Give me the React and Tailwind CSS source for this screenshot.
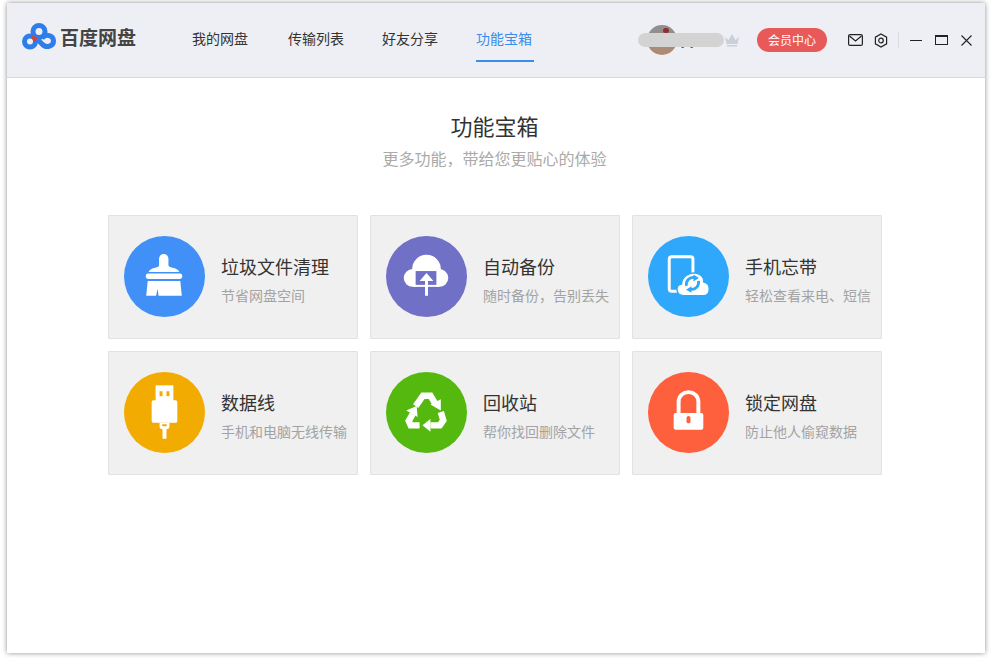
const font = { fontFamily: '"Noto Sans CJK SC", "Liberation Sans", sans-serif' };

function Logo() {
  return (
    <svg width="34" height="28" viewBox="0 0 34 28" fill="none">
      <circle cx="17" cy="8.500" r="6" stroke="#2f7de8" strokeWidth="5" />
      <circle cx="8" cy="18.500" r="5.500" stroke="#2f7de8" strokeWidth="5" />
      <path d="M12 13 L20 21 C24 25.500 31.500 23.500 31.500 18 C31.500 12 24 10.500 20 15" stroke="#2f7de8" strokeWidth="5" />
      <path d="M10.5 12 L15.5 15 L13 19 L9.5 15 Z" fill="#d8413a" />
    </svg>
  );
}

function Broom() {
  return (
    <svg width="82" height="82" viewBox="0 0 82 82" fill="#fff">
      <path d="M35.5 24 C35.5 17 45 17 45 24 V30 C45 33 55 32 56 37 H25 C26 32 35.5 33 35.5 30 Z" />
      <rect x="22" y="38.5" width="37" height="5.5" rx="2.5" />
      <path d="M24 46 H57 L58.5 61 H35 L34 54 L32.5 61 H22.5 Z" />
    </svg>
  );
}

function CloudUp() {
  return (
    <svg width="82" height="82" viewBox="0 0 82 82">
      <g fill="#fff">
        <circle cx="41" cy="34" r="14.5" />
        <circle cx="27" cy="43" r="9" />
        <circle cx="54" cy="43" r="9" />
        <rect x="27" y="38" width="27" height="14" />
      </g>
      <rect x="30" y="36" width="21" height="14" fill="#7170c7" />
      <path d="M41 38 L48 46 H42.5 V61 H39.5 V46 H34 Z" fill="#fff" />
    </svg>
  );
}

function PhoneCloud() {
  return (
    <svg width="82" height="82" viewBox="0 0 82 82">
      <rect x="21.5" y="21.5" width="24" height="35" rx="2.5" fill="none" stroke="#fff" strokeWidth="3" />
      <path d="M36 61 C28 61 27 50 34 49 C34 42 42 37 48 38 C54 39 57 43 56.5 47 C64 48 64 61 56 61 Z" fill="#fff" stroke="#2fa8fb" strokeWidth="1.5" />
      <g fill="none" stroke="#2fa8fb" strokeWidth="2.8">
        <path d="M39 51 A7 7 0 0 1 47 42.500" />
        <path d="M51 46 A7 7 0 0 1 43 54.500" />
      </g>
      <path d="M46 39.500 L51.500 43 L46 46.500 Z M44 51.500 L38.500 55 L44 58 Z" fill="#2fa8fb" />
    </svg>
  );
}

function Usb() {
  return (
    <svg width="82" height="82" viewBox="0 0 82 82">
      <rect x="32" y="14" width="18" height="16" fill="#fff" />
      <rect x="36" y="20" width="3" height="5" fill="#f2ab00" />
      <rect x="43" y="20" width="3" height="5" fill="#f2ab00" />
      <rect x="28" y="29" width="26" height="23" rx="2" fill="#fff" />
      <path d="M36 52 H46 V56 C46 58 44 58.500 43 58.500 V68 H39 V58.500 C38 58.500 36 58 36 56 Z" fill="#fff" />
      <rect x="38.500" y="53.500" width="5" height="2" rx="1" fill="#f2ab00" />
    </svg>
  );
}

function Recycle() {
  return (
    <svg width="82" height="82" viewBox="0 0 82 82">
      <g fill="none" stroke="#fff" strokeWidth="6.500">
        <path d="M30 35 L37.500 24.500 H45 L49.500 32" />
        <path d="M55.500 41 L58 49.500 L54.500 54.500 H45" />
        <path d="M34 54.500 H25 L23 50 L27 43" />
      </g>
      <g fill="#fff">
        <path d="M45 33.500 L55.500 28 L55.500 39.500 Z" />
        <path d="M45 48 V61 L37 54.500 Z" />
        <path d="M20.500 39.500 L31 35 L32 46 Z" />
      </g>
    </svg>
  );
}

function Lock() {
  return (
    <svg width="82" height="82" viewBox="0 0 82 82">
      <path d="M31 43 V31 C31 17.500 51 17.500 51 31 V43" fill="none" stroke="#fff" strokeWidth="4" />
      <rect x="26" y="42" width="30" height="17" rx="2" fill="#fff" />
      <rect x="39" y="45" width="4" height="7.500" rx="2" fill="#fe5f3c" />
    </svg>
  );
}

const tools = [
  { title: "垃圾文件清理", sub: "节省网盘空间", bg: "bg-[#4090f7]", icon: <Broom /> },
  { title: "自动备份", sub: "随时备份，告别丢失", bg: "bg-[#7170c7]", icon: <CloudUp /> },
  { title: "手机忘带", sub: "轻松查看来电、短信", bg: "bg-[#2fa8fb]", icon: <PhoneCloud /> },
  { title: "数据线", sub: "手机和电脑无线传输", bg: "bg-[#f2ab00]", icon: <Usb /> },
  { title: "回收站", sub: "帮你找回删除文件", bg: "bg-[#55b80e]", icon: <Recycle /> },
  { title: "锁定网盘", sub: "防止他人偷窥数据", bg: "bg-[#fe5f3c]", icon: <Lock /> },
];

function ToolCard({ title, sub, bg, icon }) {
  return (
    <div className="h-[124px] flex items-center pl-[15px] bg-[#f0f0f0] border border-[#e2e2e2] rounded-[1px] overflow-hidden">
      <div className={`w-[81px] h-[81px] mb-[2px] shrink-0 rounded-full flex items-center justify-center ${bg}`}>
        {icon}
      </div>
      <div className="ml-4 mt-[4px] whitespace-nowrap">
        <div className="text-[18px] leading-6 text-[#333]">{title}</div>
        <div className="mt-[7px] text-[14px] leading-5 text-[#a3a3a3]">{sub}</div>
      </div>
    </div>
  );
}

export default function App() {
  return (
    <div className="w-[992px] h-[658px] bg-white pt-[3px] pl-[7px] overflow-hidden" style={font}>
      <div className="w-[978px] h-[650px] bg-white shadow-[0_0_5px_rgba(0,0,0,0.45)]">
        <header className="h-[75px] bg-[#eeeff4] border-b border-[#d9d9de] flex items-center">
          <div className="ml-[15px] mb-[6px] flex items-center w-[170px]">
            <Logo />
            <span className="ml-[4px] text-[19px] font-bold text-[#444]">百度网盘</span>
          </div>
          <nav className="flex gap-9 text-[14px] text-[#333] h-full">
            <a className="w-[60px] h-full pb-[3px] flex items-center">我的网盘</a>
            <a className="w-[58px] h-full pb-[3px] flex items-center">传输列表</a>
            <a className="w-[58px] h-full pb-[3px] flex items-center">好友分享</a>
            <a className="relative w-[58px] h-full pb-[3px] flex items-center text-[#3b8cea]">
              功能宝箱
              <span className="absolute left-0 right-0 top-[57px] h-[2px] bg-[#3b8cea]" />
            </a>
          </nav>
          <div className="ml-auto flex items-center pr-[13px]">
            <div className="relative w-[102px] h-[30px] flex items-center">
              <div className="relative ml-[9px] w-[30px] h-[30px] rounded-full bg-gradient-to-b from-[#8d8f92] via-[#a08a82] to-[#b08c70]">
                <span className="absolute left-[16px] top-[3px] w-[6px] h-[5px] rounded-full bg-[#8e2f33]" />
              </div>
              <span className="ml-1 text-[12px] text-[#555]">y y</span>
              <div className="absolute left-0 top-[8px] w-[86px] h-[14px] rounded-full bg-[#d3d3d3]" />
              <svg className="absolute left-[86px] top-[7px]" width="16" height="16" viewBox="0 0 16 16" fill="#c9d0da">
                <path d="M1 5 L4.500 8 L8 2 L11.500 8 L15 5 L13.500 12 H2.500 Z" />
                <rect x="3" y="13" width="10" height="1.500" />
              </svg>
            </div>
            <button className="ml-[17px] w-[70px] h-6 rounded-full bg-[#e85a5a] text-white text-[12px]">会员中心</button>
            <svg className="ml-[21px]" width="15" height="12" viewBox="0 0 15 12" fill="none" stroke="#222" strokeWidth="1.200">
              <rect x="0.600" y="0.600" width="13.800" height="10.800" rx="1.500" />
              <path d="M1.500 2 L7.500 7 L13.500 2" />
            </svg>
            <svg className="ml-[11px]" width="14" height="15" viewBox="0 0 14 15" fill="none" stroke="#222" strokeWidth="1.200">
              <path d="M7 1 L12.600 4.200 V10.800 L7 14 L1.400 10.800 V4.200 Z" />
              <circle cx="7" cy="7.500" r="2.300" />
            </svg>
            <div className="ml-[10px] w-px h-[16px] bg-[#dcdde2]" />
            <div className="ml-[11px] w-[12px] h-px bg-[#222]" />
            <div className="ml-[13px] w-[13px] h-[10px] border border-[#222] border-t-2" />
            <svg className="ml-[13px]" width="11" height="11" viewBox="0 0 11 11" stroke="#222" strokeWidth="1.100">
              <path d="M0.500 0.500 L10.500 10.500 M10.500 0.500 L0.500 10.500" />
            </svg>
          </div>
        </header>
        <main>
          <div className="w-[975px] text-center">
            <h1 className="mt-[32px] text-[22px] leading-[30px] text-[#333]">功能宝箱</h1>
            <p className="mt-[6px] text-[16px] leading-6 text-[#aaa]">更多功能，带给您更贴心的体验</p>
          </div>
          <div className="mt-[45px] ml-[101px] w-[774px] grid grid-cols-3 gap-3">
            {tools.map((t) => (
              <ToolCard key={t.title} {...t} />
            ))}
          </div>
        </main>
      </div>
    </div>
  );
}
